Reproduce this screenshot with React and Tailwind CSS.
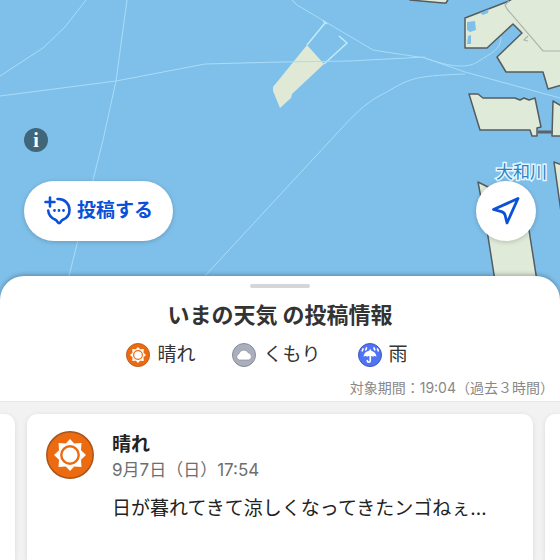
import React from 'react';

const legend = [
  { id: 'sunny', label: '晴れ', Icon: SunIcon },
  { id: 'cloudy', label: 'くもり', Icon: CloudIcon },
  { id: 'rain', label: '雨', Icon: RainIcon },
];

const post = {
  weather: '晴れ',
  date: '9月7日（日）17:54',
  comment: '日が暮れてきて涼しくなってきたンゴねぇ…',
};

// --- Weather icons (48 x 48 grid) ---
function SunIcon({ className }) {
  return (
    <svg viewBox="0 0 48 48" className={className} aria-hidden="true">
      <circle cx="24" cy="24" r="23.2" fill="#ec6a10" stroke="#a8541c" strokeWidth="1.5" />
      <path
        d="M24 8l4.200 4.500 7.300-.5-.5 7.300L40 24l-5 4.700.5 7.300-7.300-.5L24 40l-4.200-4.500-7.300.5.5-7.300L8 24l5-4.700-.5-7.300 7.300.5z"
        fill="#fff"
      />
      <circle cx="24" cy="24" r="8.7" fill="#fff" stroke="#ec6a10" strokeWidth="2.400" />
    </svg>
  );
}

function CloudIcon({ className }) {
  return (
    <svg viewBox="0 0 48 48" className={className} aria-hidden="true">
      <circle cx="24" cy="24" r="23" fill="#abafbd" stroke="#868a96" strokeWidth="2" />
      <path
        d="M15 34a6.300 6.300 0 0 1-1.200-12.300 10 10 0 0 1 18.600-2.200 7.500 7.500 0 0 1 1.600 14.500z"
        fill="#fff"
        stroke="#8d909b"
        strokeWidth="1.5"
      />
    </svg>
  );
}

function RainIcon({ className }) {
  return (
    <svg viewBox="0 0 48 48" className={className} aria-hidden="true">
      <circle cx="24" cy="24" r="23" fill="#4f73f5" stroke="#4159b8" strokeWidth="2" />
      <path d="M11 27.500c1-7.500 6-12 13-12s12 4.500 13 12c-2.500-2-5-2-7 0-1.500-1.500-3-2-4.500-1.500h-3C21 25.500 19.500 26 18 27.500c-2-2-4.500-2-7 0z" fill="#fff" />
      <path d="M24.500 14v21c0 4.500-6 4.500-6 0" fill="none" stroke="#fff" strokeWidth="3.400" strokeLinecap="round" />
      <path d="M10 12l-1.500 3.500M17 10l-1.500 3.500M32 10l1.500 3.500M39 12l1.500 3.500" fill="none" stroke="#fff" strokeWidth="3.400" strokeLinecap="round" />
    </svg>
  );
}

// --- Button icons ---
function PostIcon({ className }) {
  return (
    <svg viewBox="0 0 28 30" className={className} fill="none" stroke="currentColor" strokeWidth="2.600" strokeLinecap="round" strokeLinejoin="round" aria-hidden="true">
      <path d="M6 1.500v9M1.500 6h9" />
      <path d="M13.500 3c7 -.4 12 4.600 12 11 0 5-3 8.300-6.700 9.800-1.200.5-1.500 1.100-2.200 2.200-1 1.600-2 1.600-3 0-.7-1.100-1-1.700-2.200-2.200C7.800 22.300 4.600 19.300 4.200 14.500" />
      <path d="M10.500 14.500h.01M15 14.500h.01M19.500 14.500h.01" strokeWidth="2.800" />
    </svg>
  );
}

function LocateIcon({ className }) {
  return (
    <svg viewBox="0 0 30 30" className={className} fill="none" stroke="currentColor" strokeWidth="2.800" strokeLinejoin="round" aria-hidden="true">
      <path d="M27 2.500L2.500 13.500l8 2.200q3 .8 3.600 3.500l1.900 7.800z" />
    </svg>
  );
}

function BayMap() {
  return (
    <svg
      viewBox="0 0 560 300"
      preserveAspectRatio="xMidYMin slice"
      className="absolute inset-0 h-full w-full"
      role="img"
      aria-label="地図"
    >
      <rect width="560" height="300" fill="#7fc0ea" />

      {/* offshore island */}
      <path d="M307 45L324 64 292 94 291 98 280 108 273 91 273 87z" fill="#dfe9d6" />
      <path d="M307 45L325 23M323 21l4 3M324 64L347 43 339 36" fill="none" stroke="#c4ecfb" strokeWidth="1.400" />

      {/* port land */}
      <g fill="#dfead8" stroke="#545c60" strokeWidth="1.500" strokeLinejoin="round">
        <path d="M408 -2L410 0 443 3 446 3 449 -2z" />
        <path d="M465 18L509 1 515 -3 565 -3 565 84 548 89 543 72 506 72 497 57 522 33 513 24 487 48 465 48z" />
        <path d="M469 94L478 94 483 98 515 98 520 100 524 98 529 100 535 98 541 127 537 128 537 136 532 136 530 130 480 130z" />
        <path d="M553 101L565 108 565 136 552 136z" />
        <path d="M478 182L490 188 522 200 529 230 540 300 498 300 487 230z" />
        <path d="M554 162L565 166 565 240z" />
      </g>
      <path d="M538 132h15" stroke="#5c6265" strokeWidth="3" />
      <path d="M467 22L475 21 476 30 470 32 467 30zM468 36L471 35 471 44 467 44zM480 13L489 9 488 13 483 15z" fill="#7fc0ea" />
      <path d="M509 1L505 5 507 9 543 51H560M528 36l-4 4 4 1" fill="none" stroke="#aab4b0" strokeWidth="1.200" />

      {/* ferry routes */}
      <g fill="none" stroke="#a9dcf8" strokeWidth="1">
        <path d="M86 0L65 27 43 48 0 76" />
        <path d="M127 0L116 81 103 140 68 280" />
        <path d="M0 96L116 81 205 64 280 62 350 61 425 57" />
        <path d="M292 0L297 5 373 50 425 58 465 72 560 98" />
        <path d="M425 58C450 67 468 69 479 61C491 53 501 50 501 37" />
        <path d="M204 277L340 130C352 117 366 102 383 94C410 79 410 76 465 74" />
      </g>

      <text
        x="496"
        y="178"
        fontSize="17"
        fill="#2b83c4"
        stroke="#e6f6ff"
        strokeWidth="3"
        paintOrder="stroke"
      >
        大和川
      </text>
    </svg>
  );
}

function PostCard({ weather, date, comment }) {
  return (
    <article className="flex min-w-0 flex-1 gap-[18px] rounded-t-[10px] bg-white px-[19px] pt-[17px] shadow-[0_1px_5px_rgba(0,0,0,0.1)]">
      <SunIcon className="h-12 w-12 shrink-0" />
      <div className="min-w-0 flex-1">
        <h2 className="text-[19px] leading-7 font-bold text-[#222]">{weather}</h2>
        <p className="text-[17px] leading-[22px] text-[#6e6e6e]">{date}</p>
        <p className="mt-3 truncate text-[19px] leading-8 text-[#222]">{comment}</p>
      </div>
    </article>
  );
}

function App() {
  return (
    <main className="flex min-h-screen flex-col overflow-hidden bg-white font-[Inter,'Noto_Sans_CJK_JP',sans-serif]">
      <section className="relative px-6 pt-32 pb-[59px]">
        <BayMap />
        <div className="relative flex flex-col items-start gap-[29px]">
          <button
            type="button"
            aria-label="情報"
            className="flex h-6 w-6 items-center justify-center rounded-full bg-[#40667c] font-['Liberation_Serif',serif] text-[20px] leading-6 font-bold text-white"
          >
            i
          </button>
          <div className="flex w-full items-center justify-between">
            <button
              type="button"
              className="flex h-[60px] items-center gap-[5px] rounded-full bg-white px-5 text-[19px] font-bold text-[#0a50d8] shadow-[0_1px_5px_rgba(0,0,0,0.2)]"
            >
              <PostIcon className="h-[30px] w-[28px]" />
              投稿する
            </button>
            <button
              type="button"
              aria-label="現在地"
              className="flex h-[60px] w-[60px] items-center justify-center rounded-full bg-white text-[#0a50d8] shadow-[0_1px_5px_rgba(0,0,0,0.2)]"
            >
              <LocateIcon className="h-[30px] w-[30px]" />
            </button>
          </div>
        </div>
      </section>

      <section className="relative -mt-6 flex flex-1 flex-col rounded-t-3xl bg-white pt-2 shadow-[0_-1px_5px_rgba(0,0,0,0.3)]">
        <div className="mx-auto h-1 w-[60px] rounded-full bg-[#d6d6d6]" />
        <h1 className="mt-[11px] text-center text-[22px] leading-8 font-bold text-[#333]">いまの天気 の投稿情報</h1>
        <ul className="mt-[10px] flex justify-center gap-[37px] pr-[26px]">
          {legend.map(({ id, label, Icon }) => (
            <li key={id} className="flex items-center gap-[7px] text-[19px] leading-7 text-[#333]">
              <Icon className="h-6 w-6" />
              {label}
            </li>
          ))}
        </ul>
        <p className="mt-[7px] pr-[6px] text-right text-[14px] leading-6 text-[#888]">対象期間：19:04（過去３時間）</p>

        {/* carousel: neighbours peek in on both sides */}
        <div className="mt-[1px] flex flex-1 gap-3 border-t border-[#e6e6e6] bg-[#f2f2f2] pt-3">
          <div className="w-[15px] rounded-tr-[10px] bg-white shadow-[0_1px_5px_rgba(0,0,0,0.1)]" />
          <PostCard {...post} />
          <div className="w-[15px] rounded-tl-[10px] bg-white shadow-[0_1px_5px_rgba(0,0,0,0.1)]" />
        </div>
      </section>
    </main>
  );
}

export default App;
